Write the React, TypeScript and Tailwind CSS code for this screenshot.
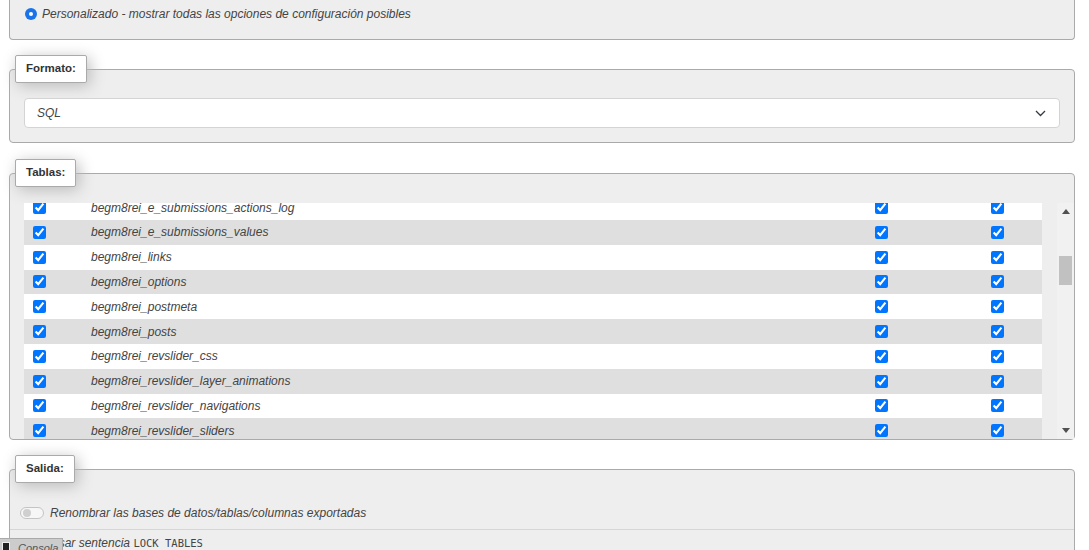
import React from "react";

const tables = [
  "begm8rei_e_submissions_actions_log",
  "begm8rei_e_submissions_values",
  "begm8rei_links",
  "begm8rei_options",
  "begm8rei_postmeta",
  "begm8rei_posts",
  "begm8rei_revslider_css",
  "begm8rei_revslider_layer_animations",
  "begm8rei_revslider_navigations",
  "begm8rei_revslider_sliders",
  "begm8rei_revslider_slides",
];

function Legend({ children }: { children: React.ReactNode }) {
  return (
    <div className="ml-[5px] -mt-[15px] w-fit h-[28px] px-[10px] flex items-center bg-white border border-[#aaa] rounded-[2px] shadow-[3px_3px_15px_#bbb] text-[11.5px] font-bold text-[#333] not-italic">
      {children}
    </div>
  );
}

function Check() {
  return <input type="checkbox" defaultChecked className="w-[13px] h-[13px] m-0" />;
}

export default function App() {
  return (
    <div className="relative h-[550px] overflow-hidden bg-white pl-[9px] pr-[14px] font-['Liberation_Sans',Arial,sans-serif] text-[12px] text-[#444]">
      {/* Panel 1 */}
      <div className="h-[40px] border-x border-b border-[#aaa] rounded-b-[4px] bg-[#eee]">
        <div className="pt-[6px] pl-[15px] h-[22px] flex items-center">
          <div className="w-[12px] h-[12px] rounded-full bg-[#1a73e8] flex items-center justify-center shrink-0">
            <div className="w-[4px] h-[4px] rounded-full bg-white" />
          </div>
          <span className="ml-[5px] italic leading-[16px]">
            Personalizado - mostrar todas las opciones de configuración posibles
          </span>
        </div>
      </div>

      {/* Panel 2: Formato */}
      <div className="mt-[29px] border border-[#aaa] rounded-[4px] bg-[#eee]">
        <Legend>Formato:</Legend>
        <div className="px-[14px] pt-[15px] pb-[14px]">
          <div className="h-[30px] bg-white border border-[#d4d4d4] rounded-[4px] flex items-center justify-between pl-[12px] pr-[13px]">
            <span className="italic">SQL</span>
            <svg width="11" height="7" viewBox="0 0 11 7">
              <polyline points="1,1 5.5,5.5 10,1" fill="none" stroke="#343a40" strokeWidth="1.3" />
            </svg>
          </div>
        </div>
      </div>

      {/* Panel 3: Tablas */}
      <div className="mt-[30px] border border-[#aaa] rounded-[4px] bg-[#eee]">
        <Legend>Tablas:</Legend>
        <div className="pl-[14px] pt-[16px] flex">
          <div className="w-[1018px] h-[236px] overflow-hidden">
            <div className="-mt-[7.8px]">
              {tables.map((t, i) => (
                <div
                  key={t}
                  className={
                    i % 2 === 0
                      ? "h-[24.8px] bg-white grid grid-cols-[67px_784px_116px_1fr] items-center"
                      : "h-[24.8px] bg-[#dfdfdf] grid grid-cols-[67px_784px_116px_1fr] items-center"
                  }
                >
                  <div className="pl-[9px] flex items-center">
                    <Check />
                  </div>
                  <div className="italic">{t}</div>
                  <div className="flex items-center">
                    <Check />
                  </div>
                  <div className="flex items-center">
                    <Check />
                  </div>
                </div>
              ))}
            </div>
          </div>
          <div className="ml-auto w-[17px] h-[236px] bg-[#f1f1f1] flex flex-col">
            <div className="h-[17px] flex items-center justify-center">
              <svg width="8" height="5" viewBox="0 0 8 5">
                <polygon points="0,5 4,0 8,5" fill="#505050" />
              </svg>
            </div>
            <div className="mt-[36px] mx-[2px] h-[29px] bg-[#c1c1c1]" />
            <div className="flex-1" />
            <div className="h-[17px] flex items-center justify-center">
              <svg width="8" height="5" viewBox="0 0 8 5">
                <polygon points="0,0 8,0 4,5" fill="#505050" />
              </svg>
            </div>
          </div>
        </div>
      </div>

      {/* Panel 4: Salida */}
      <div className="mt-[29px] h-[200px] border border-[#aaa] rounded-[4px] bg-[#eee]">
        <Legend>Salida:</Legend>
        <div className="pt-[14px]">
          <div className="py-[8px] pl-[10px] flex items-center">
            <div className="w-[24px] h-[12px] rounded-full border border-[#c4c4c4] bg-[#f6f6f6] flex items-center pl-[2px]">
              <div className="w-[8px] h-[8px] rounded-full bg-[#cfcfcf]" />
            </div>
            <span className="ml-[6px] italic leading-[16px]">
              Renombrar las bases de datos/tablas/columnas exportadas
            </span>
          </div>
          <div className="border-t border-[#d6d6d6] pt-[5px] pl-[40px] leading-[16px]">
            <span className="italic">Usar sentencia </span>
            <code className="font-['DejaVu_Sans_Mono',monospace] text-[10.5px] not-italic">LOCK TABLES</code>
          </div>
        </div>
      </div>

      {/* Consola tab overlay */}
      <div className="absolute left-0 bottom-0 w-[63px] h-[12px] bg-[#cccccc] border-t border-r border-[#aaa] flex items-start pl-[2px] overflow-hidden">
        <div className="w-[8px] h-[9px] bg-[#222] border border-[#eee] mt-[3px] shrink-0" />
        <span className="ml-[8px] mt-[1px] text-[11px] italic text-[#555] leading-[16px]">Consola</span>
      </div>
    </div>
  );
}
